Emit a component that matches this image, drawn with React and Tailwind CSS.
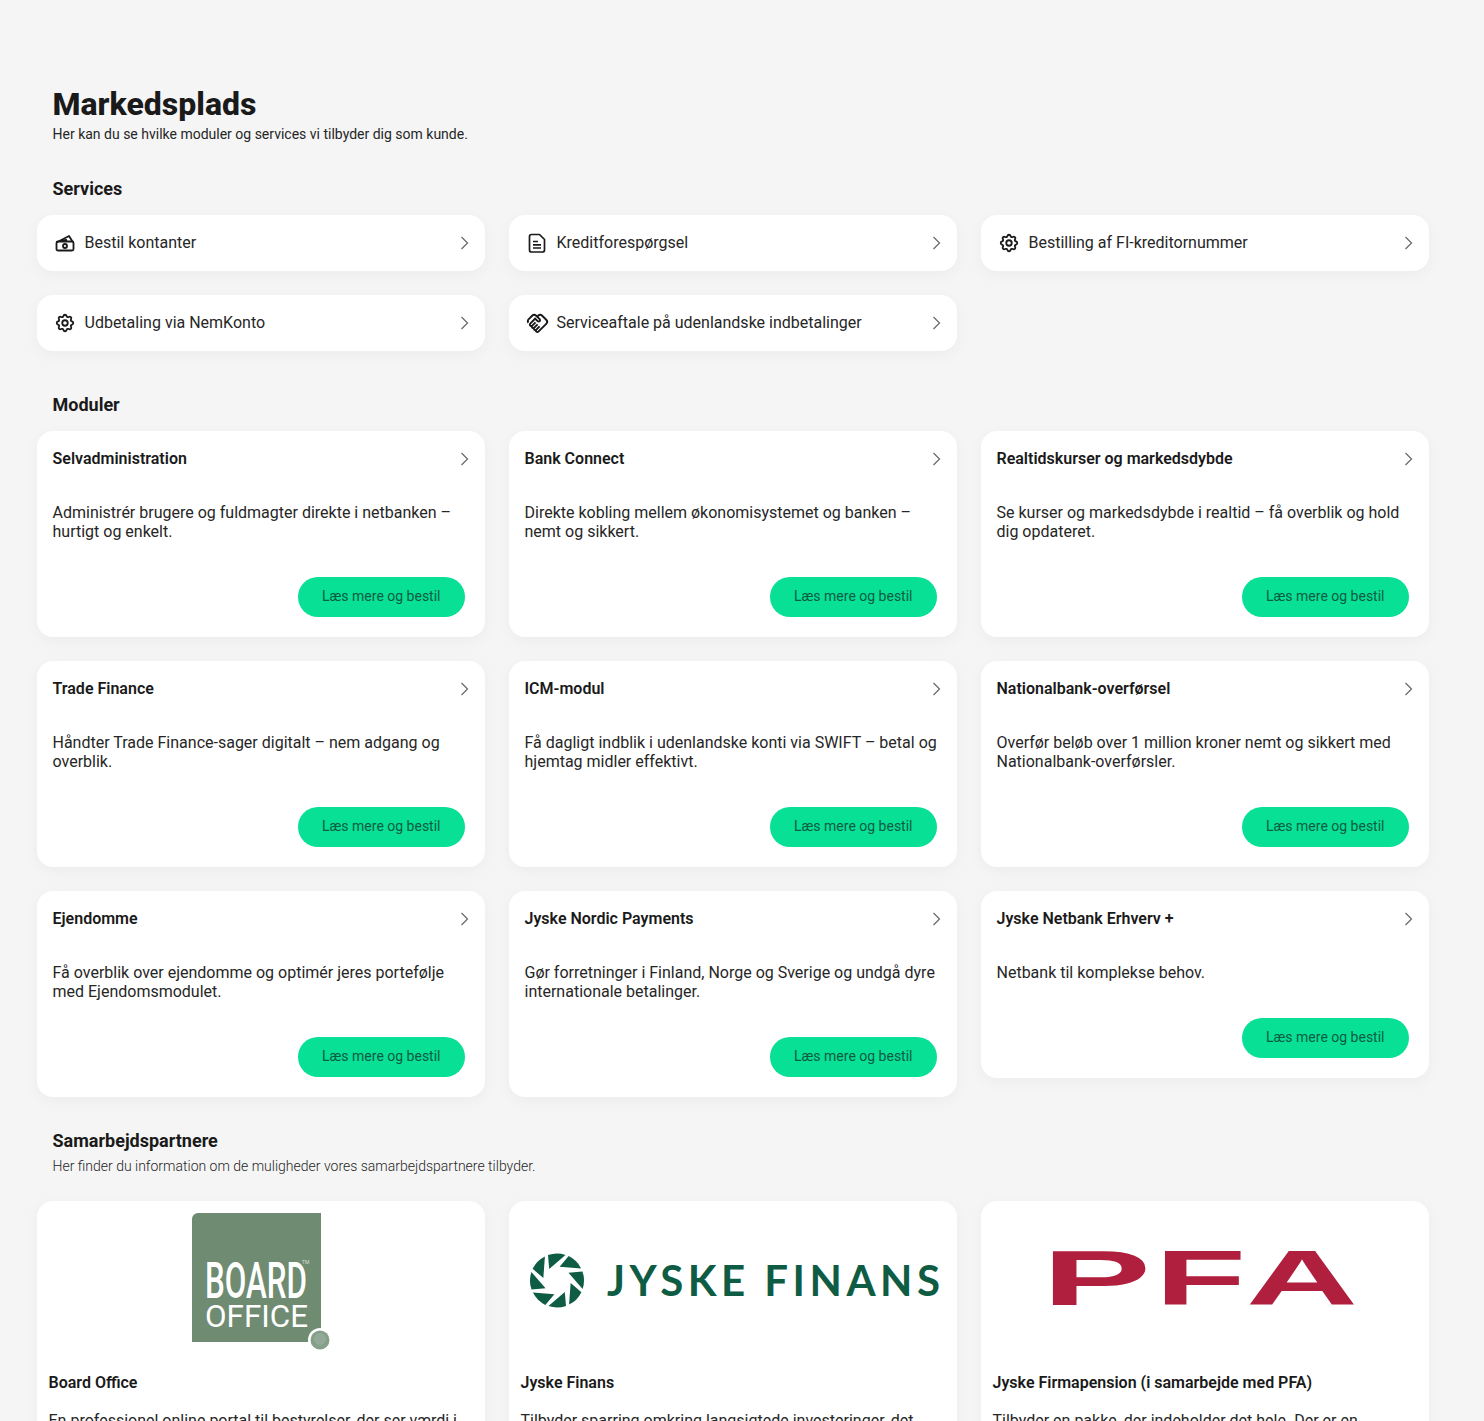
import { TbSettings } from "react-icons/tb";
import { MdOutlineHandshake } from "react-icons/md";

const services = [
  { icon: "cash", label: "Bestil kontanter" },
  { icon: "file", label: "Kreditforespørgsel" },
  { icon: "gear", label: "Bestilling af FI-kreditornummer" },
  { icon: "gear", label: "Udbetaling via NemKonto" },
  { icon: "hands", label: "Serviceaftale på udenlandske indbetalinger" },
];

const modules = [
  { title: "Selvadministration", text: "Administrér brugere og fuldmagter direkte i netbanken – hurtigt og enkelt." },
  { title: "Bank Connect", text: "Direkte kobling mellem økonomisystemet og banken – nemt og sikkert." },
  { title: "Realtidskurser og markedsdybde", text: "Se kurser og markedsdybde i realtid – få overblik og hold dig opdateret." },
  { title: "Trade Finance", text: "Håndter Trade Finance-sager digitalt – nem adgang og overblik." },
  { title: "ICM-modul", text: "Få dagligt indblik i udenlandske konti via SWIFT – betal og hjemtag midler effektivt." },
  { title: "Nationalbank-overførsel", text: "Overfør beløb over 1 million kroner nemt og sikkert med Nationalbank-overførsler." },
  { title: "Ejendomme", text: "Få overblik over ejendomme og optimér jeres portefølje med Ejendomsmodulet." },
  { title: "Jyske Nordic Payments", text: "Gør forretninger i Finland, Norge og Sverige og undgå dyre internationale betalinger." },
  { title: "Jyske Netbank Erhverv +", text: "Netbank til komplekse behov." },
];

const partners = [
  { logo: "board", title: "Board Office", text: "En professionel online portal til bestyrelser, der ser værdi i at samle alt ét sted." },
  { logo: "finans", title: "Jyske Finans", text: "Tilbyder sparring omkring langsigtede investeringer, det være sig biler og maskiner." },
  { logo: "pfa", title: "Jyske Firmapension (i samarbejde med PFA)", text: "Tilbyder en pakke, der indeholder det hele. Der er en løsning til alle." },
];

function Chevron() {
  return (
    <svg viewBox="0 0 10 14" className="w-[10px] h-[14px] shrink-0" fill="none" stroke="#666" strokeWidth="1.2">
      <path d="M1.5 1l6 6-6 6" />
    </svg>
  );
}

function CashIcon() {
  return (
    <svg viewBox="0 0 24 24" className="w-6 h-6 shrink-0" fill="none" stroke="#1a1a1a" strokeWidth="1.8" strokeLinejoin="round">
      <path d="M3.5 11.5L16 5l3.5 5.5" />
      <path d="M8 9.5L14 9" />
      <rect x="3.5" y="10.5" width="17" height="9" rx="1.5" />
      <circle cx="12" cy="15" r="2" />
    </svg>
  );
}

function FileIcon() {
  return (
    <svg viewBox="0 0 24 24" className="w-6 h-6 shrink-0" fill="none" stroke="#1a1a1a" strokeWidth="1.7" strokeLinejoin="round">
      <path d="M6.5 3.5H14.5L19.5 8.5V19A2 2 0 0 1 17.5 21H6.5A2 2 0 0 1 4.5 19V5.500A2 2 0 0 1 6.500 3.500Z" />
      <path d="M8 10.500H13M8 13.800H16M8 17H16" />
    </svg>
  );
}

function ServiceIcon({ name }) {
  if (name === "cash") return <CashIcon />;
  if (name === "file") return <FileIcon />;
  if (name === "hands") return <MdOutlineHandshake className="w-[23px] h-[23px] shrink-0 text-[#1a1a1a]" />;
  return <TbSettings className="w-[22px] h-[22px] shrink-0 text-[#1a1a1a]" />;
}

function ServiceCard({ icon, label }) {
  return (
    <div className="h-14 bg-white rounded-2xl shadow-[0_4px_16px_rgba(0,0,0,0.04)] flex items-center pl-[18px] pr-[15px]">
      <span className="w-[20px] flex justify-center shrink-0">
        <ServiceIcon name={icon} />
      </span>
      <span className="ml-[9.5px] pb-[2px] flex-1 text-base leading-[19px] text-[#262626]">{label}</span>
      <Chevron />
    </div>
  );
}

function ModuleCard({ title, text }) {
  return (
    <div className="bg-white rounded-2xl shadow-[0_4px_16px_rgba(0,0,0,0.04)] pt-[18px] pb-5 pl-[15.5px] pr-[15px]">
      <div className="flex items-center justify-between">
        <h3 className="text-base leading-[19px] font-semibold text-[#1a1a1a]">{title}</h3>
        <Chevron />
      </div>
      <p className="mt-[35px] text-base leading-[19px] text-[#262626] pr-[5px]">{text}</p>
      <div className="mt-[36px] pr-[5px] flex justify-end">
        <button className="h-10 px-[24.5px] pb-[2px] rounded-full bg-[#07e095] text-sm text-[#0d5c43]">Læs mere og bestil</button>
      </div>
    </div>
  );
}

function BoardLogo() {
  return (
    <svg viewBox="0 0 448 160" className="w-full h-[160px]">
      <path d="M161 12h123v129H155V18a6 6 0 0 1 6-6z" fill="#6f8b72" />
      <text x="168" y="97" fontFamily="Roboto, sans-serif" fontWeight="500" fontSize="50" fill="#fff" textLength="102" lengthAdjust="spacingAndGlyphs">BOARD</text>
      <text x="168" y="126" fontFamily="Roboto, sans-serif" fontSize="31" fill="#fff" textLength="103" lengthAdjust="spacingAndGlyphs">OFFICE</text>
      <text x="265" y="63" fontFamily="Roboto, sans-serif" fontSize="5" fill="#fff" opacity="0.7">TM</text>
      <circle cx="283" cy="139" r="12" fill="#fff" />
      <circle cx="283" cy="139" r="9.5" fill="#84a088" />
      <circle cx="283" cy="138" r="6" fill="#93a997" />
    </svg>
  );
}

function FinansLogo() {
  const blades = [0, 45, 90, 135, 180, 225, 270, 315];
  return (
    <svg viewBox="0 0 448 160" className="w-full h-[160px]">
      <g transform="translate(48 79.5)" fill="#0f5c45">
        {blades.map((a) => (
          <path key={a} transform={`rotate(${a})`} d="M-9 -25.500A27 27 0 0 1 8.500 -25.600L-7.800 -11.500z" />
        ))}
      </g>
      <text x="98" y="95" fontFamily="Lato, sans-serif" fontWeight="700" fontSize="42" fill="#0f5c45" textLength="333">JYSKE FINANS</text>
    </svg>
  );
}

function PfaLogo() {
  const letter = "Liberation Sans, Arial, sans-serif";
  return (
    <svg viewBox="0 0 448 160" className="w-full h-[160px]">
      <g fontFamily={letter} fontWeight="700" fontSize="78" fill="#b01f3d">
        <text x="61" y="104" textLength="109" lengthAdjust="spacingAndGlyphs">P</text>
        <text x="174" y="104" textLength="91" lengthAdjust="spacingAndGlyphs">F</text>
        <text x="265" y="104" textLength="112" lengthAdjust="spacingAndGlyphs">A</text>
      </g>
    </svg>
  );
}

function PartnerCard({ logo, title, text }) {
  return (
    <div className="bg-white rounded-2xl shadow-[0_4px_16px_rgba(0,0,0,0.04)] pb-5">
      {logo === "board" && <BoardLogo />}
      {logo === "finans" && <FinansLogo />}
      {logo === "pfa" && <PfaLogo />}
      <div className="pl-[11.5px] pr-[20px]">
        <h3 className="mt-[11.5px] text-base leading-[19px] font-semibold text-[#1a1a1a]">{title}</h3>
        <p className="mt-[19px] text-base leading-[19px] text-[#262626]">{text}</p>
      </div>
    </div>
  );
}

function App() {
  return (
    <div className="h-[1421px] overflow-hidden bg-[#f5f5f5] font-['Roboto',sans-serif]">
      <div className="w-[1392px] ml-[37px] pt-[85px]">
        <section className="px-[15.5px]">
          <h1 className="text-[32px] leading-[38px] font-extrabold text-[#1a1a1a]">Markedsplads</h1>
          <p className="mt-[1.5px] text-sm leading-[19px] text-[#262626]">
            Her kan du se hvilke moduler og services vi tilbyder dig som kunde.
          </p>
        </section>

        <h2 className="mt-[33.5px] mb-[14px] px-[15.5px] text-lg leading-6 font-bold text-[#1a1a1a]">Services</h2>
        <div className="grid grid-cols-3 gap-6">
          {services.map((s) => (
            <ServiceCard key={s.label} {...s} />
          ))}
        </div>

        <h2 className="mt-[42px] mb-[14px] px-[15.5px] text-lg leading-6 font-bold text-[#1a1a1a]">Moduler</h2>
        <div className="grid grid-cols-3 gap-6 items-start">
          {modules.map((m) => (
            <ModuleCard key={m.title} {...m} />
          ))}
        </div>

        <section className="mt-8 px-[15.5px]">
          <h2 className="text-lg leading-6 font-bold text-[#1a1a1a]">Samarbejdspartnere</h2>
          <p className="mt-[3.5px] text-sm leading-[19px] font-light text-[#262626]">
            Her finder du information om de muligheder vores samarbejdspartnere tilbyder.
          </p>
        </section>
        <div className="mt-[25.5px] grid grid-cols-3 gap-6 items-start">
          {partners.map((p) => (
            <PartnerCard key={p.title} {...p} />
          ))}
        </div>
      </div>
    </div>
  );
}

export default App;
